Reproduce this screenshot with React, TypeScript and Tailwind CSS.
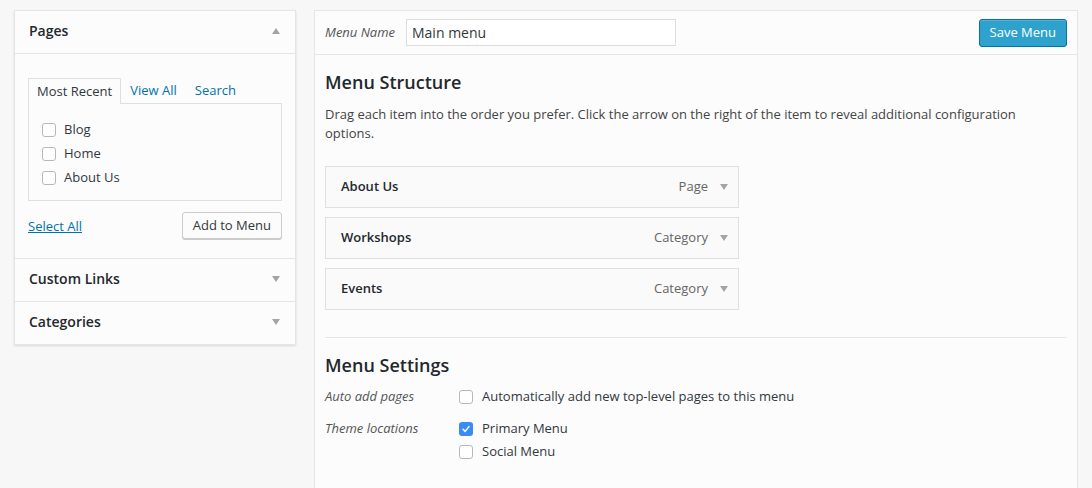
import { useState } from 'react';

function Caret({ up = false }: { up?: boolean }) {
  return (
    <svg width="10" height="8" viewBox="0 0 10 8" className="shrink-0">
      <path d={up ? 'M1 7 L5 1 L9 7 Z' : 'M1 1 L9 1 L5 7 Z'} fill="#a0a5aa" />
    </svg>
  );
}

function Box({ checked = false }: { checked?: boolean }) {
  if (checked) {
    return (
      <span className="w-[14px] h-[14px] rounded-[3px] bg-[#3b8cf2] flex items-center justify-center shrink-0">
        <svg width="10" height="10" viewBox="0 0 10 10">
          <path d="M2 5.2 L4.2 7.4 L8 2.6" stroke="white" strokeWidth="1.5" fill="none" strokeLinecap="round" strokeLinejoin="round" />
        </svg>
      </span>
    );
  }
  return <span className="w-[14px] h-[14px] rounded-[3px] border border-[#b4b9be] bg-white shrink-0" />;
}

export default function App() {
  const [tab, setTab] = useState('recent');

  const pages = ['Blog', 'Home', 'About Us'];
  const items = [
    { title: 'About Us', type: 'Page' },
    { title: 'Workshops', type: 'Category' },
    { title: 'Events', type: 'Category' },
  ];

  return (
    <div
      className="bg-[#f7f7f7] text-[13px] text-[#444] flex items-start gap-[18px] pl-[14px] pt-[10px] overflow-hidden h-[488px]"
      style={{ fontFamily: '"Open Sans", "Liberation Sans", sans-serif' }}
    >
      {/* left column */}
      <div className="w-[282px] bg-[#fcfcfc] border border-[#e5e5e5] shadow-[0_1px_2px_rgba(0,0,0,0.12)] shrink-0">
        <div className="h-[43px] flex items-center justify-between px-[14px] pb-[3px] border-b border-[#e5e5e5]">
          <span className="text-[14px] font-semibold text-[#23282d]">Pages</span>
          <Caret up />
        </div>
        <div className="px-[13px] pt-[23px] pb-[19px] border-b border-[#e5e5e5]">
          <div className="flex items-end text-[13px] h-[26px]">
            <button
              onClick={() => setTab('recent')}
              className={`h-[26px] px-[8px] border border-b-0 border-[#dfdfdf] bg-[#fcfcfc] relative top-px ${
                tab === 'recent' ? 'text-[#32373c]' : 'text-[#0073aa]'
              }`}
            >
              Most Recent
            </button>
            <span className="px-[9px] text-[#0073aa] leading-[26px]">View All</span>
            <span className="px-[9px] text-[#0073aa] leading-[26px]">Search</span>
          </div>
          <div className="h-[98px] border border-[#dfdfdf] pt-[14px] pl-[13px] flex flex-col">
            {pages.map((p) => (
              <label key={p} className="h-[24px] flex items-center gap-[8px] text-[#32373c]">
                <Box />
                <span>{p}</span>
              </label>
            ))}
          </div>
          <div className="flex items-center justify-between mt-[11px]">
            <a className="text-[#0073aa] underline relative top-px">Select All</a>
            <button className="h-[27px] px-[10px] border border-[#ccc] rounded-[3px] bg-[#fcfcfc] text-[#32373c] shadow-[0_1px_0_#ccc]">
              Add to Menu
            </button>
          </div>
        </div>
        <div className="h-[43px] flex items-center justify-between px-[14px] pb-[3px] border-b border-[#e5e5e5]">
          <span className="text-[14px] font-semibold text-[#23282d]">Custom Links</span>
          <Caret />
        </div>
        <div className="h-[42px] flex items-center justify-between px-[14px] pb-[3px]">
          <span className="text-[14px] font-semibold text-[#23282d]">Categories</span>
          <Caret />
        </div>
      </div>

      {/* right column */}
      <div className="w-[764px] bg-[#fcfcfc] border border-[#e5e5e5] h-[480px] shrink-0">
        <div className="h-[44px] flex items-center justify-between pl-[10px] pr-[10px] border-b border-[#e5e5e5]">
          <div className="flex items-center">
            <span className="italic text-[#555] w-[81px]">Menu Name</span>
            <div className="w-[270px] h-[27px] border border-[#ddd] bg-white flex items-center px-[5px] text-[14px] text-[#32373c]">
              Main menu
            </div>
          </div>
          <button className="h-[28px] px-[10px] rounded-[3px] bg-[#2ea2cc] border border-[#0074a2] text-white text-[13px] shadow-[inset_0_1px_0_rgba(120,200,230,0.5)]">
            Save Menu
          </button>
        </div>
        <div className="pl-[10px] pr-[11px]">
          <h3 className="text-[18px] font-semibold text-[#23282d] mt-[15px] leading-[24px]">Menu Structure</h3>
          <p className="mt-[11px] leading-[19px] pr-[20px]">
            Drag each item into the order you prefer. Click the arrow on the right of the item to reveal additional configuration options.
          </p>
          <div className="mt-[23px] flex flex-col gap-[9px] w-[414px]">
            {items.map((it) => (
              <div key={it.title} className="h-[42px] border border-[#dfdfdf] bg-[#fafafa] flex items-center justify-between pl-[15px] pr-[9px]">
                <span className="font-semibold text-[#23282d]">{it.title}</span>
                <span className="flex items-center gap-[11px] text-[#666]">
                  {it.type}
                  <Caret />
                </span>
              </div>
            ))}
          </div>
          <div className="mt-[27px] border-t border-[#e5e5e5]" />
          <h3 className="text-[18px] font-semibold text-[#23282d] mt-[15px] leading-[24px]">Menu Settings</h3>
          <div className="mt-[9px] flex flex-col">
            <div className="flex items-center h-[22px]">
              <span className="italic text-[#555] w-[134px]">Auto add pages</span>
              <label className="flex items-center gap-[9px] text-[#32373c]">
                <Box />
                Automatically add new top-level pages to this menu
              </label>
            </div>
            <div className="flex items-start mt-[10px]">
              <span className="italic text-[#555] w-[134px] leading-[22px] -mt-[1px]">Theme locations</span>
              <div className="flex flex-col">
                <label className="flex items-center gap-[9px] h-[22px] text-[#32373c]">
                  <Box checked />
                  Primary Menu
                </label>
                <label className="flex items-center gap-[9px] h-[23px] pt-px text-[#32373c]">
                  <Box />
                  Social Menu
                </label>
              </div>
            </div>
          </div>
        </div>
      </div>
    </div>
  );
}
